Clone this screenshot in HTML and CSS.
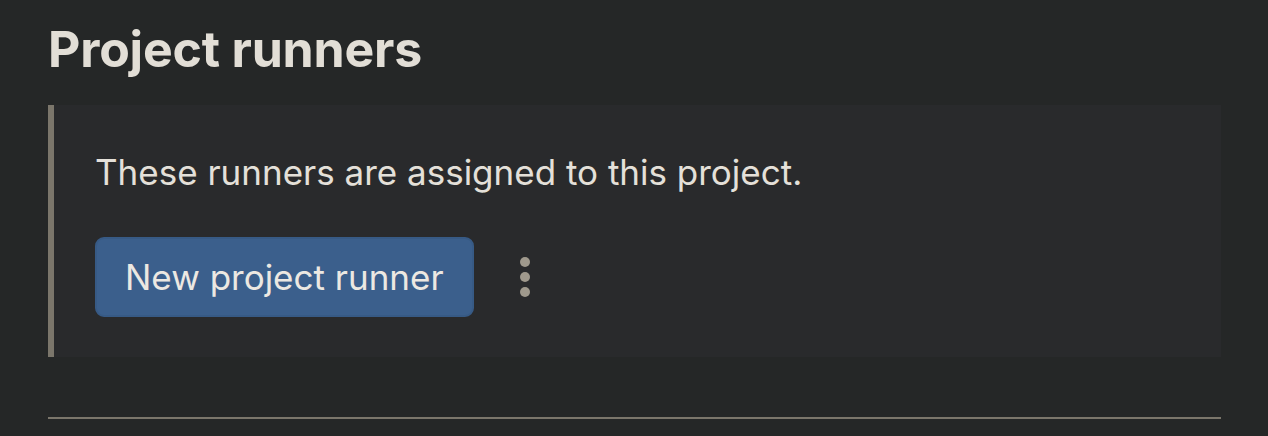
FILE: index.html
```html
<!DOCTYPE html>
<html>
<head>
<meta charset="utf-8">
<link rel="stylesheet" href="styles.css">
</head>
<body>
<main class="page">
  <h2 class="title">Project runners</h2>
  <section class="panel">
    <p class="desc">These runners are assigned to this project.</p>
    <div class="actions">
      <button class="btn-primary">New project runner</button>
      <button class="kebab" aria-label="More actions">
        <svg width="12" height="42" viewBox="0 0 12 42"><circle cx="6" cy="6" r="5"/><circle cx="6" cy="21" r="5"/><circle cx="6" cy="36" r="5"/></svg>
      </button>
    </div>
  </section>
  <hr class="divider">
</main>
</body>
</html>
```
FILE: styles.css
```css
html, body {
  margin: 0;
  padding: 0;
  background: #252727;
  font-family: Inter, "Noto Sans", sans-serif;
  color: #e4e0d9;
}
.page {
  padding: 17px 47px 0 48px;
}
.title {
  margin: 0;
  font-size: 50px;
  font-weight: 700;
  line-height: 64px;
  letter-spacing: -0.2px;
  color: #e2ded6;
}
.panel {
  margin-top: 24px;
  background: #292a2c;
  border-left: 6px solid #7b766b;
  padding: 43px 42px 40px 41px;
}
.desc {
  margin: 0;
  font-size: 35px;
  line-height: 48px;
}
.actions {
  margin-top: 41px;
  display: flex;
  align-items: center;
  gap: 45px;
}
.btn-primary {
  height: 80px;
  padding: 0 28px;
  border-radius: 9px;
  background: #3b5f8c;
  border: 2px solid #375a85;
  color: #ece8e2;
  font-family: inherit;
  font-size: 35px;
}
.kebab {
  background: none;
  border: none;
  padding: 0;
  display: flex;
  fill: #9f998d;
}
.divider {
  margin: 60px 0 0 0;
  border: none;
  height: 2px;
  background: #7b766b;
}
```
